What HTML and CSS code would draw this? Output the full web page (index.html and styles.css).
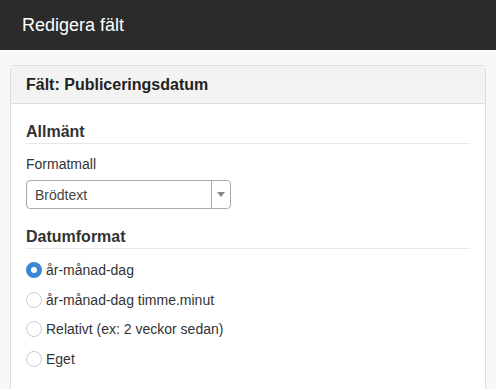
FILE: index.html
```html
<!DOCTYPE html>
<html lang="sv">
<head>
    <meta charset="UTF-8">
    <title>Redigera fält</title>
    <link rel="stylesheet" href="styles.css">
</head>
<body>
    <div class="topbar">
        <h1 class="topbar-title">Redigera fält</h1>
    </div>

    <div class="page">
        <div class="panel">
            <div class="panel-heading">Fält: Publiceringsdatum</div>
            <div class="panel-body">
                <h3 class="section-title">Allmänt</h3>
                <label class="field-label">Formatmall</label>
                <div class="select-box">
                    <span class="select-value">Brödtext</span>
                    <span class="select-arrow"></span>
                </div>

                <h3 class="section-title">Datumformat</h3>
                <div class="radio-list">
                    <label class="radio-row"><span class="radio checked"></span>år-månad-dag</label>
                    <label class="radio-row"><span class="radio"></span>år-månad-dag timme.minut</label>
                    <label class="radio-row"><span class="radio"></span>Relativt (ex: 2 veckor sedan)</label>
                    <label class="radio-row"><span class="radio"></span>Eget</label>
                </div>
            </div>
        </div>
    </div>
</body>
</html>
```

FILE: styles.css
```css
body {
    margin: 0;
    font-family: "Liberation Sans", Arial, sans-serif;
    background-color: #f8f8f8;
    color: #333;
}
.topbar {
    background-color: #2b2b2b;
    height: 50px;
    display: flex;
    align-items: center;
    padding: 0 22px;
}
.topbar-title {
    margin: 0;
    color: #fff;
    font-size: 18px;
    font-weight: normal;
}
.page {
    padding: 15px 10px 0 10px;
}
.panel {
    background-color: #fff;
    border: 1px solid #ddd;
    border-radius: 4px;
    height: 340px;
    box-sizing: border-box;
    box-shadow: 0 1px 1px rgba(0, 0, 0, 0.05);
}
.panel-heading {
    background-color: #f3f3f3;
    border-bottom: 1px solid #ddd;
    border-radius: 3px 3px 0 0;
    height: 38px;
    box-sizing: border-box;
    padding: 10px 15px;
    font-size: 16px;
    font-weight: bold;
    color: #222;
}
.panel-body {
    padding: 19px 15px 0 15px;
}
.section-title {
    margin: 0 0 5px 0;
    padding-bottom: 2px;
    border-bottom: 1px solid #e8e8e8;
    font-size: 16px;
    font-weight: bold;
    color: #333;
}
.field-label {
    display: block;
    margin-top: 12px;
    font-size: 14px;
    margin-bottom: 8px;
}
.select-box {
    width: 205px;
    height: 29px;
    box-sizing: border-box;
    border: 1px solid #aaa;
    border-radius: 4px;
    display: flex;
    align-items: center;
    margin-bottom: 19px;
}
.select-value {
    flex: 1;
    padding-left: 8px;
    font-size: 14px;
    color: #444;
}
.select-arrow {
    width: 18px;
    height: 100%;
    border-left: 1px solid #aaa;
    display: flex;
    align-items: center;
    justify-content: center;
}
.select-arrow::after {
    content: "";
    border-left: 4px solid transparent;
    border-right: 4px solid transparent;
    border-top: 5px solid #888;
}
.radio-list {
    margin-top: 6px;
}
.radio-row {
    display: flex;
    align-items: center;
    height: 29.7px;
    font-size: 14px;
    color: #333;
}
.radio {
    width: 16px;
    height: 16px;
    border: 1px solid #ccc;
    border-radius: 50%;
    margin-right: 4px;
    box-sizing: border-box;
    background-color: #fff;
}
.radio.checked {
    border: 5px solid #3a87d6;
}
```
